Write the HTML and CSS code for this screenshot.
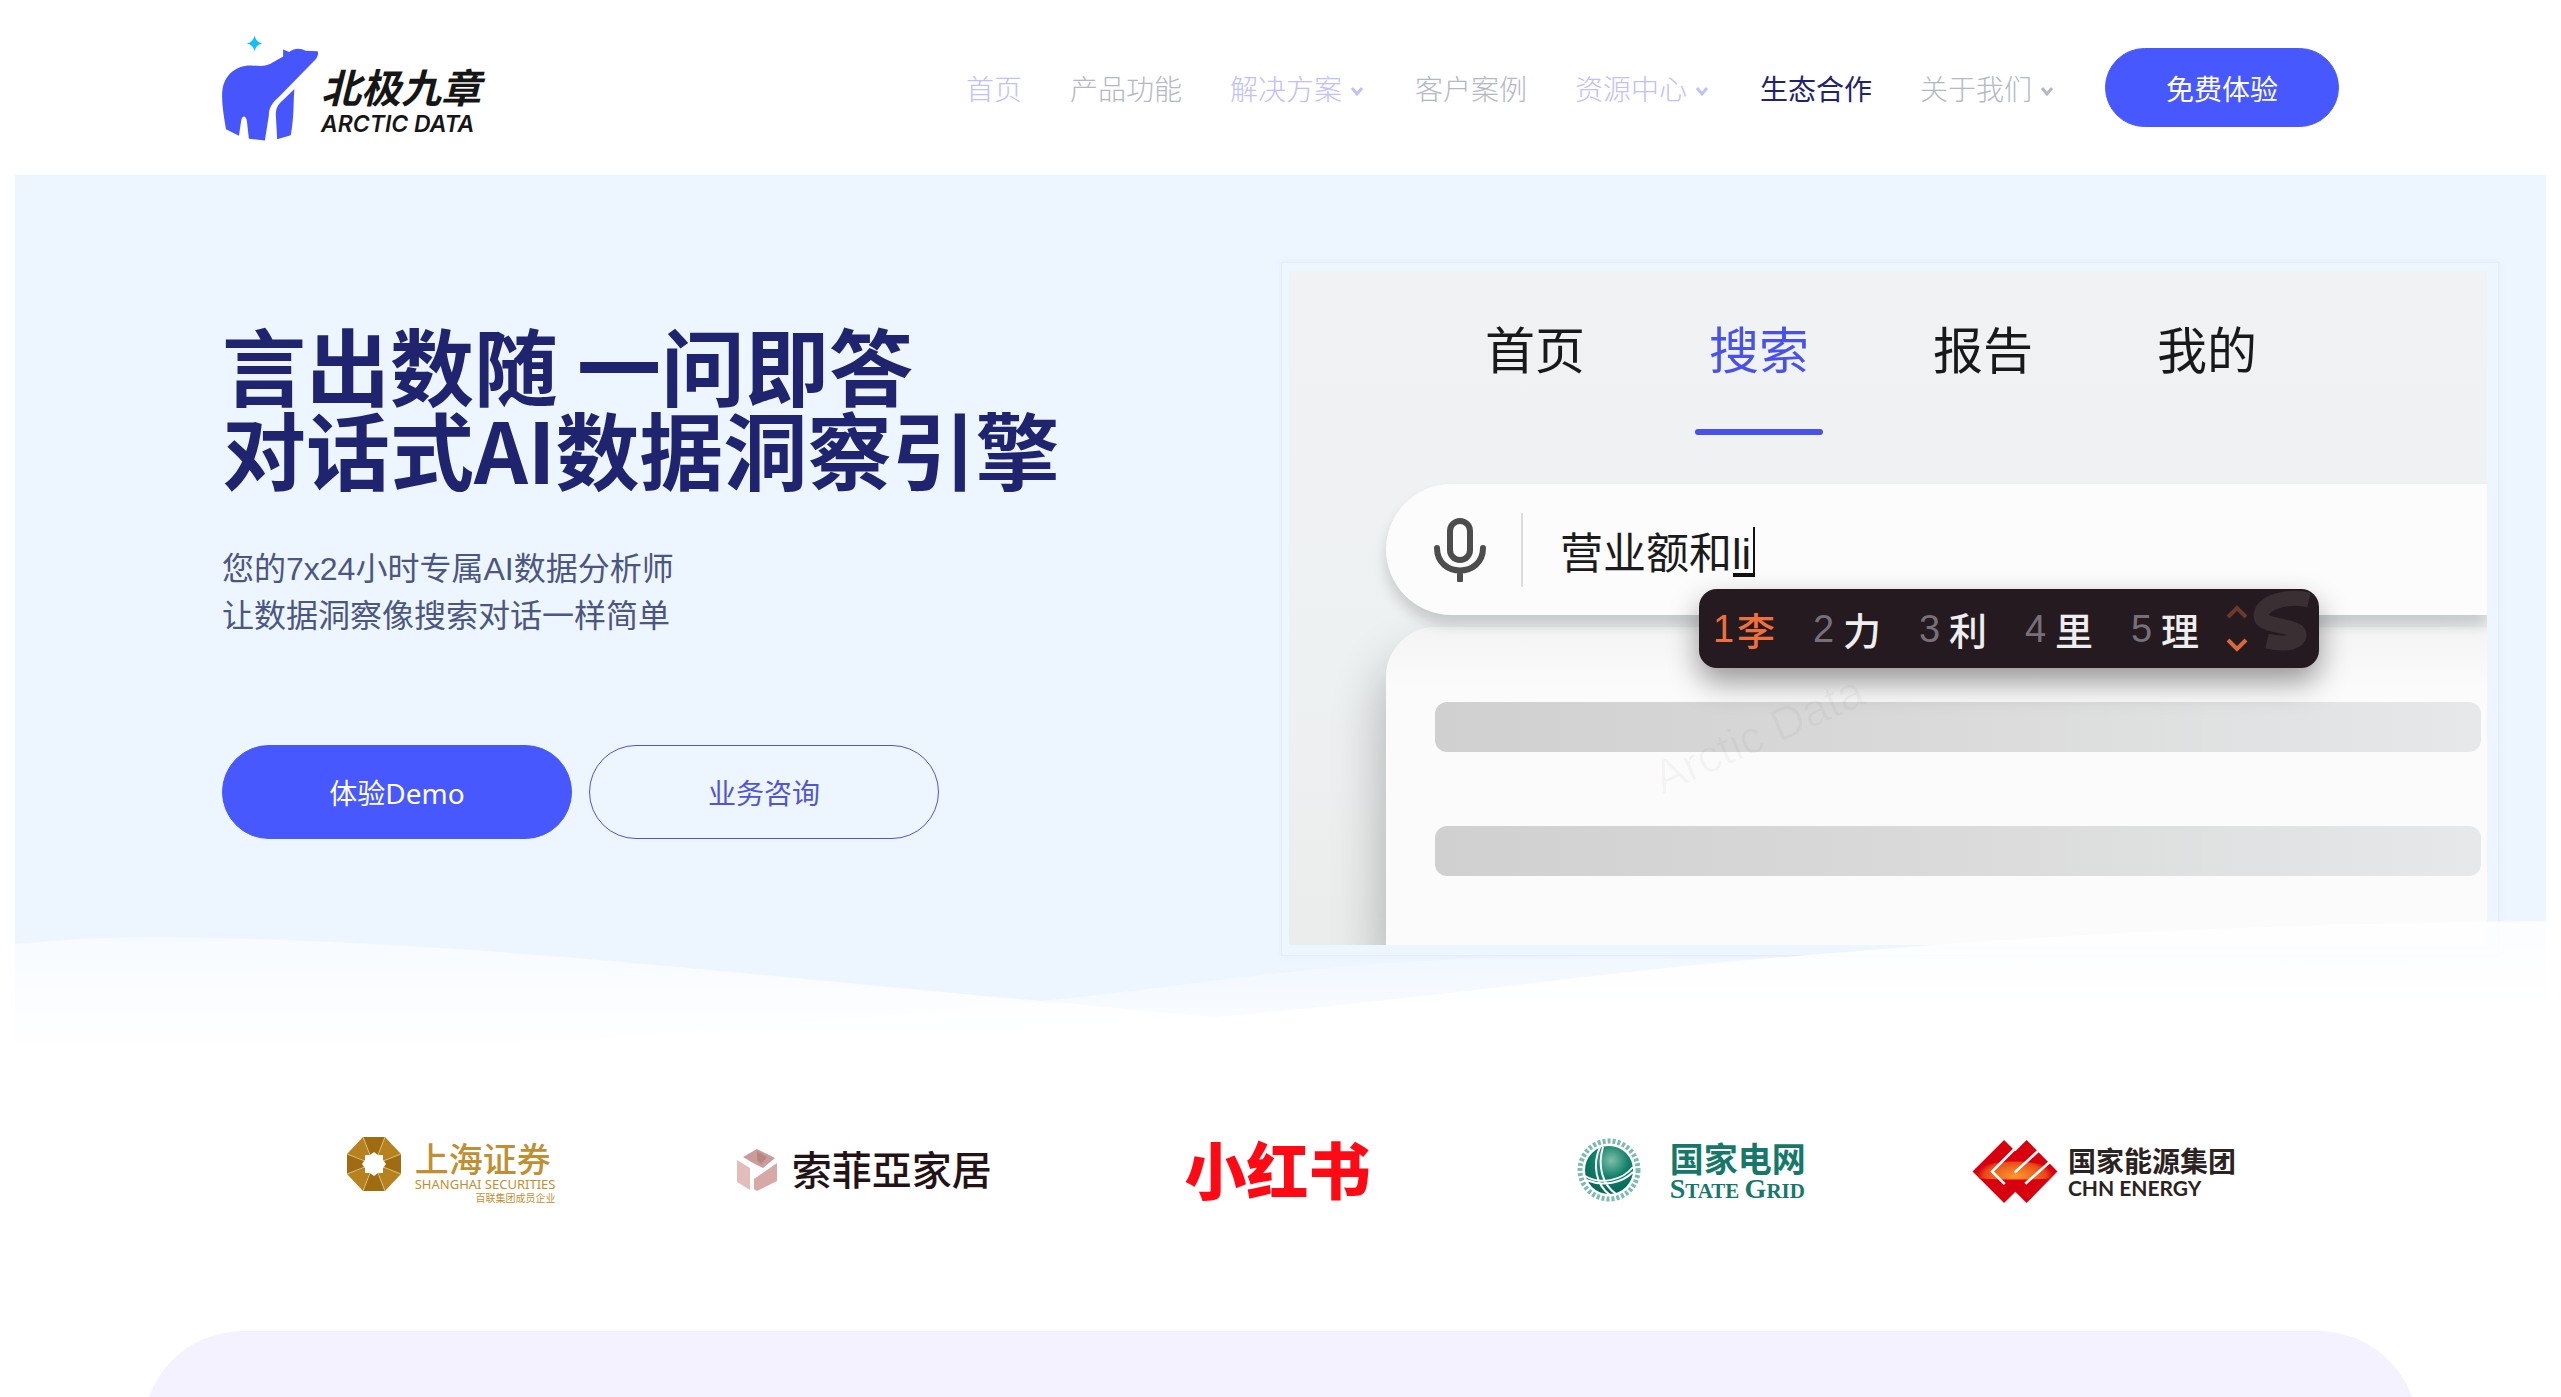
FILE: index.html
```html
<!DOCTYPE html>
<html lang="zh-CN">
<head>
<meta charset="utf-8">
<meta name="viewport" content="width=device-width, initial-scale=1">
<title>北极九章</title>
<link rel="stylesheet" href="styles.css">
</head>
<body>
<header class="site-header">
  <a class="brand" href="#">
    <svg class="brand-bear" viewBox="66 43 292 318" aria-hidden="true">
      <path fill="#4755fc" d="M250 86L268 94C280 82 302 80 318 90L354 91C358 100 352 114 340 124L240 226C215 248 207 262 207 285L195 360L147 355L141 302C138 284 128 284 124 298L117 346L78 326C70 280 64 240 67 210C72 162 110 132 155 134C180 136 192 138 212 129C230 120 240 112 250 108Z"/>
      <path fill="#4755fc" d="M284 205C280 245 284 285 273 344L232 356L228 282C228 262 236 250 250 238Z"/>
      <path fill="#0fc0fb" d="M164 44Q168 64 187 68Q168 72 164 91Q160 72 141 68Q160 64 164 44Z"/>
    </svg>
    <span class="brand-text">
      <span class="brand-cn">北极九章</span>
      <span class="brand-en">ARCTIC DATA</span>
    </span>
  </a>
  <nav class="main-nav">
    <a class="nav-link nav-tint" href="#">首页</a>
    <a class="nav-link" href="#">产品功能</a>
    <a class="nav-link nav-tint" href="#">解决方案<svg class="chevron" viewBox="0 0 25 28" aria-hidden="true"><path d="M10 14l5 6 5-6"/></svg></a>
    <a class="nav-link" href="#">客户案例</a>
    <a class="nav-link nav-tint" href="#">资源中心<svg class="chevron" viewBox="0 0 25 28" aria-hidden="true"><path d="M10 14l5 6 5-6"/></svg></a>
    <a class="nav-link nav-current" href="#">生态合作</a>
    <a class="nav-link" href="#">关于我们<svg class="chevron" viewBox="0 0 25 28" aria-hidden="true"><path d="M10 14l5 6 5-6"/></svg></a>
    <button class="btn btn-trial" type="button">免费体验</button>
  </nav>
</header>

<main>
  <section class="hero">
    <div class="hero-copy">
      <h1 class="hero-title">言出数随 一问即答<br>对话式AI数据洞察引擎</h1>
      <p class="hero-lead">您的7x24小时专属AI数据分析师<br>让数据洞察像搜索对话一样简单</p>
      <div class="hero-actions">
        <button class="btn btn-large" type="button">体验Demo</button>
        <button class="btn btn-large btn-outline" type="button">业务咨询</button>
      </div>
    </div>

    <div class="demo-frame">
      <div class="demo">
        <div class="demo-tabs">
          <button class="demo-tab" type="button">首页</button>
          <button class="demo-tab demo-tab-active" type="button">搜索</button>
          <button class="demo-tab" type="button">报告</button>
          <button class="demo-tab" type="button">我的</button>
        </div>
        <div class="demo-search">
          <svg class="mic" viewBox="0 0 52 64" aria-hidden="true">
            <rect x="16" y="3" width="20" height="39" rx="10"/>
            <path d="M3 30C3 60 49 60 49 30M26 53V62"/>
          </svg>
          <div class="field">
            <input class="demo-input" type="text" value="营业额和li" aria-label="搜索">
            <span class="composing"></span>
          </div>
          <div class="ime">
            <span class="candidate candidate-active"><span>1</span><b>李</b></span>
            <span class="candidate"><span>2</span><b>力</b></span>
            <span class="candidate"><span>3</span><b>利</b></span>
            <span class="candidate"><span>4</span><b>里</b></span>
            <span class="candidate"><span>5</span><b>理</b></span>
            <svg class="ime-mark" viewBox="0 0 92 79" aria-hidden="true">
              <path d="M3 28l9-9 9 9" stroke="#6b3a2c" stroke-width="4"/>
              <path d="M3 51l9 9 9-9" stroke="#d9683a" stroke-width="4"/>
              <path d="M84 11C62 6 38 13 36 26C35 39 74 35 74 46C73 54 58 56 42 52" stroke="#3a2f33" stroke-width="15"/>
            </svg>
          </div>
        </div>
        <div class="demo-card">
          <div class="skeleton"></div>
          <div class="skeleton"></div>
          <span class="watermark">Arctic Data</span>
        </div>
      </div>
    </div>

    <svg class="waves" viewBox="0 0 2531 180" preserveAspectRatio="none" aria-hidden="true">
      <defs>
        <linearGradient id="veil" gradientUnits="userSpaceOnUse" x1="0" y1="30" x2="0" y2="165">
          <stop offset="0" stop-color="#fff" stop-opacity=".5"/>
          <stop offset="1" stop-color="#fff"/>
        </linearGradient>
        <linearGradient id="veil-right" gradientUnits="userSpaceOnUse" x1="0" y1="30" x2="0" y2="150">
          <stop offset="0" stop-color="#fff" stop-opacity=".8"/>
          <stop offset="1" stop-color="#fff"/>
        </linearGradient>
        <linearGradient id="veil-mid" gradientUnits="userSpaceOnUse" x1="0" y1="60" x2="0" y2="180">
          <stop offset="0" stop-color="#fff" stop-opacity=".2"/>
          <stop offset="1" stop-color="#fff"/>
        </linearGradient>
      </defs>
      <path fill="url(#veil)" d="M0 54C80 46 150 46 240 49C520 58 740 86 1025 111L1200 127C1350 142 1500 155 1700 165L2531 180H0Z"/>
      <path fill="url(#veil-mid)" d="M0 172C400 170 800 132 1025 111C1180 96 1300 72 1500 67C1800 64 2200 75 2531 78V180H0Z"/>
      <path fill="url(#veil-right)" d="M0 178C500 172 900 150 1200 127C1420 108 1600 80 1782 66C1960 50 2200 34 2531 31V180H0Z"/>
    </svg>
  </section>

  <section class="clients">
    <div class="client">
      <svg class="mark mark-octagon" viewBox="0 0 54 54" aria-hidden="true">
        <path fill="#b5821f" d="M16 0H38L54 17V37L38 54H16L0 37V17Z"/>
        <path fill="#a06c12" d="M16 0H38L32 17H22ZM54 17V37L38 32V22ZM16 54H38L32 37H22ZM0 17V37L16 32V22Z"/>
        <path stroke="#dfc283" stroke-width="1" d="M16 0L23 18M38 0L31 18M54 17L36 24M54 37L36 30M38 54L31 36M16 54L23 36M0 37L18 30M0 17L18 24"/>
        <path fill="#fff" d="M27 15l4 3 5 0 0 5 3 4-3 4 0 5-5 0-4 3-4-3-5 0 0-5-3-4 3-4 0-5 5 0z"/>
      </svg>
      <span class="client-text client-gold">
        <span class="client-name">上海证券</span>
        <span class="gold-en">SHANGHAI SECURITIES</span>
        <span class="gold-sub">百联集团成员企业</span>
      </span>
    </div>
    <div class="client">
      <svg class="mark mark-cube" viewBox="0 0 40 42" aria-hidden="true">
        <path fill="#e3bdbb" d="M0 11L13 19V41L0 33Z"/>
        <path fill="#c99c9a" d="M6 8L20 0L38 9L26 19L16 14Z"/>
        <path fill="#d6a9a7" d="M40 14V32L20 42L17 40V30Z"/>
        <path fill="#b98583" d="M20 2L30 8L24 15L20 11Z"/>
      </svg>
      <span class="sofia">索菲亞家居</span>
    </div>
    <div class="client"><span class="red-name">小红书</span></div>
    <div class="client client-grid">
      <svg class="mark mark-globe" viewBox="0 0 66 66" aria-hidden="true">
        <defs><radialGradient id="globe" cx=".55" cy=".3" r=".7"><stop offset="0" stop-color="#7fbfa8"/><stop offset=".5" stop-color="#12806a"/><stop offset="1" stop-color="#056457"/></radialGradient></defs>
        <circle cx="33" cy="33" r="29" fill="none" stroke="#7dbbb0" stroke-width="5" stroke-dasharray="3 2"/>
        <circle cx="33" cy="33" r="24" fill="url(#globe)"/>
        <g fill="none" stroke="#fff" stroke-width="2"><path d="M24 10C16 28 20 48 34 58M27 10C21 30 27 48 40 57M9 39C24 48 46 44 57 30M10 43C28 50 46 46 57 35"/></g>
      </svg>
      <span class="client-text client-green">
        <span class="client-name">国家电网</span>
        <span class="green-en"><span class="cap">S</span>TATE <span class="cap">G</span>RID</span>
      </span>
    </div>
    <div class="client">
      <svg class="mark mark-energy" viewBox="155 92 256 190" aria-hidden="true">
        <defs><radialGradient id="sun" gradientUnits="userSpaceOnUse" cx="283" cy="200" r="115" gradientTransform="matrix(1 0 0 .45 0 110)"><stop offset="0" stop-color="#fa9a2c"/><stop offset=".8" stop-color="#ea4a1a"/><stop offset="1" stop-color="#d8000f"/></radialGradient></defs>
        <path fill="#d8000f" d="M155 187L250 92L284 126L318 92L411 187L318 282L284 248L250 282Z"/>
        <path fill="url(#sun)" d="M164 178C220 150 340 150 402 178L390 208C330 212 240 212 176 208Z"/>
        <path fill="none" stroke="#fff" stroke-width="8" d="M284 117L214 187L252 225M352 126L282 190M386 160L314 224"/>
      </svg>
      <span class="client-text client-dark">
        <span class="dark-cn">国家能源集团</span>
        <span class="dark-en">CHN ENERGY</span>
      </span>
    </div>
  </section>

  <section class="next-panel"></section>
</main>
</body>
</html>
```
FILE: styles.css
```css
* { box-sizing: border-box; }

html { scrollbar-width: none; }

body {
  margin: 0;
  background: #fff;
  color: #22246b;
  font-family: "Noto Sans", "Noto Sans CJK SC", sans-serif;
  font-size: 28px;
}

a { color: inherit; text-decoration: none; }
button, input { font: inherit; color: inherit; }

/* Header */
.site-header {
  display: flex;
  align-items: center;
  justify-content: space-between;
  max-width: 2117px;
  height: 175px;
  margin: 0 auto;
}
.brand { display: flex; align-items: center; }
.brand-bear { width: 97px; height: 106px; }
.brand-text {
  display: flex;
  flex-direction: column;
  padding: 26px 0 0 2px;
  color: #161616;
  font-style: italic;
}
.brand-cn { font-size: 40px; font-weight: 700; line-height: 46px; font-family: "Noto Sans CJK SC", sans-serif; }
.brand-en { font-size: 23px; font-weight: 600; line-height: 30px; font-family: Inter, sans-serif; }

.main-nav { display: flex; align-items: center; gap: 48px; }
.nav-link {
  display: flex;
  align-items: center;
  color: #b4b7c4;
  font-family: "Noto Sans CJK SC", sans-serif;
  font-weight: 300;
  line-height: 40px;
  white-space: nowrap;
}
.nav-tint { color: #c0c0fb; }
.nav-current { color: #22246b; font-weight: 400; }
.chevron { width: 25px; height: 28px; fill: none; stroke: currentColor; stroke-width: 3; }

.btn {
  border: 1px solid #4858ff;
  border-radius: 50px;
  background: #4858ff;
  color: #fff;
  cursor: pointer;
}
.btn-trial { width: 234px; height: 79px; }
.btn-large { width: 350px; height: 94px; }
.btn-outline { background: transparent; border-color: #5055d2; color: #5055d2; }

/* Hero */
.hero {
  position: relative;
  display: grid;
  grid-template-columns: 1059fr 1218fr;
  align-items: start;
  margin: 0 15px;
  padding: 87px 47px 114px 207px;
  background: #edf5ff;
}
.hero-copy { padding-top: 60px; }
.hero-title {
  margin: 0 0 56px;
  color: #20246e;
  font-family: "Noto Sans CJK SC", sans-serif;
  font-size: 84px;
  font-weight: 700;
  line-height: 84px;
}
.hero-lead {
  margin: 0 0 105px;
  color: #4b5681;
  font-family: "Liberation Sans", "Noto Sans CJK SC", sans-serif;
  font-size: 32px;
  line-height: 47px;
}
.hero-actions { display: flex; gap: 17px; }

.demo-frame {
  padding: 8px 11px 10px 7px;
  border: 1px solid #e4ecfb;
  box-shadow: 0 0 6px #e3ecfb;
}
.demo {
  display: flex;
  flex-direction: column;
  height: 674px;
  overflow: hidden;
  background: linear-gradient(#f0f2f4, #eef1f2 60%, #ebecec);
}
.demo-tabs { display: flex; gap: 96px; padding: 46px 0 0 182px; }
.demo-tab {
  position: relative;
  padding: 0 14px 52px;
  border: 0;
  background: none;
  color: #18191b;
  font-family: "Noto Sans CJK SC", sans-serif;
  font-size: 50px;
  line-height: 60px;
}
.demo-tab-active { color: #4852e8; }
.demo-tab-active::after {
  content: "";
  position: absolute;
  left: 0;
  right: 0;
  top: 100%;
  height: 6px;
  border-radius: 3px;
  background: #4852e8;
}
.demo-search {
  position: relative;
  z-index: 1;
  display: flex;
  align-items: center;
  height: 131px;
  margin: 55px 0 0 97px;
  padding-left: 48px;
  border-radius: 66px 0 0 66px;
  background: #fcfcfc;
  box-shadow: 0 10px 14px rgba(0, 0, 0, .16);
}
.mic { width: 52px; height: 64px; fill: none; stroke: #4d4d4d; stroke-width: 6; stroke-linecap: round; }
.field {
  position: relative;
  flex: 1;
  margin-left: 35px;
  padding-left: 37px;
  border-left: 2px solid #dcdcdc;
}
.demo-input {
  display: block;
  width: 100%;
  height: 74px;
  padding: 0;
  border: 0;
  outline: 0;
  background: none;
  color: #1b1b1b;
  font-family: "Liberation Sans", "Noto Sans CJK SC", sans-serif;
  font-size: 43px;
}
.composing {
  position: absolute;
  left: 210px;
  top: 14px;
  width: 22px;
  height: 50px;
  border-right: 2px solid #111;
  border-bottom: 4px solid #111;
}
.ime {
  position: absolute;
  left: 313px;
  top: 105px;
  display: flex;
  align-items: center;
  gap: 38px;
  width: 620px;
  height: 79px;
  padding-left: 14px;
  border-radius: 18px;
  background: #241a1f;
  box-shadow: 0 14px 30px rgba(0, 0, 0, .4);
  overflow: hidden;
}
.candidate { display: flex; align-items: center; gap: 10px; color: #eee; font-size: 38px; line-height: 56px; }
.candidate span { width: 20px; color: #77707a; font-family: "Liberation Sans", sans-serif; }
.candidate b { font-family: "Noto Sans CJK SC", sans-serif; font-weight: 500; }
.candidate-active { gap: 4px; }
.candidate-active, .candidate-active span { color: #ee7040; }
.ime-mark { flex: none; width: 92px; height: 79px; margin-left: -12px; fill: none; }

.demo-card {
  position: relative;
  flex: 1;
  display: flex;
  flex-direction: column;
  gap: 74px;
  margin: 12px 0 0 97px;
  padding: 75px 6px 0 49px;
  border-radius: 50px 0 0 0;
  background: linear-gradient(#f4f4f4, #fbfbfb 60px);
  box-shadow: -6px 30px 50px rgba(0, 0, 0, .24);
}
.skeleton { height: 50px; border-radius: 12px; background: linear-gradient(90deg, #d0d0d0, #d9d9d9 45%, #e6e8e9); }
.watermark {
  position: absolute;
  left: 260px;
  top: 80px;
  color: rgba(0, 0, 0, .03);
  font-family: "Liberation Sans", sans-serif;
  font-size: 46px;
  transform: rotate(-24deg);
}

.waves { position: absolute; z-index: 2; left: 0; bottom: 0; width: 100%; height: 180px; }

/* Client logos */
.clients {
  display: grid;
  grid-template-columns: repeat(5, 1fr);
  max-width: 2072px;
  margin: 0 auto;
  padding: 67px 6px 128px 0;
}
.client { display: flex; align-items: center; justify-content: center; height: 66px; white-space: nowrap; }
.client-text { display: flex; flex-direction: column; }
.client-name { font-family: "Noto Sans CJK SC", sans-serif; font-size: 34px; font-weight: 500; line-height: 38px; }
.mark { flex: none; }

.mark-octagon { width: 54px; height: 54px; margin: 0 14px 12px 0; fill: none; }
.client-gold { color: #bf8f33; padding-top: 4px; }
.gold-en { font-family: "Noto Sans", sans-serif; font-size: 13px; line-height: 14px; }
.gold-sub { align-self: flex-end; font-size: 10px; line-height: 14px; }

.mark-cube { width: 40px; height: 42px; margin-right: 15px; }
.sofia { color: #241316; font-family: "Noto Sans CJK TC", sans-serif; font-size: 40px; font-weight: 500; line-height: 60px; padding-bottom: 4px; }

.red-name { color: #ff0a14; font-family: "Noto Sans CJK SC", sans-serif; font-size: 62px; font-weight: 900; line-height: 62px; padding-bottom: 4px; }

.mark-globe { width: 66px; height: 66px; margin-right: 28px; }
.client-green { color: #17786a; padding-top: 4px; }
.client-green .client-name { font-weight: 700; line-height: 36px; }
.green-en { font-family: "Liberation Serif", serif; font-size: 21px; font-weight: 700; line-height: 26px; }
.cap { font-size: 28px; line-height: 26px; }

.mark-energy { width: 86px; height: 63px; margin: 3px 10px 0 0; }
.client-dark { color: #2b2322; padding-top: 4px; }
.dark-cn { font-family: "Noto Sans CJK SC", sans-serif; font-size: 28px; font-weight: 700; line-height: 32px; }
.dark-en { font-family: Lato, sans-serif; font-size: 21px; font-weight: 700; line-height: 24px; }

.next-panel {
  min-height: 120px;
  max-width: 2275px;
  margin: 0 auto;
  border-radius: 100px 100px 0 0;
  background: #f3f2fe;
}
```
